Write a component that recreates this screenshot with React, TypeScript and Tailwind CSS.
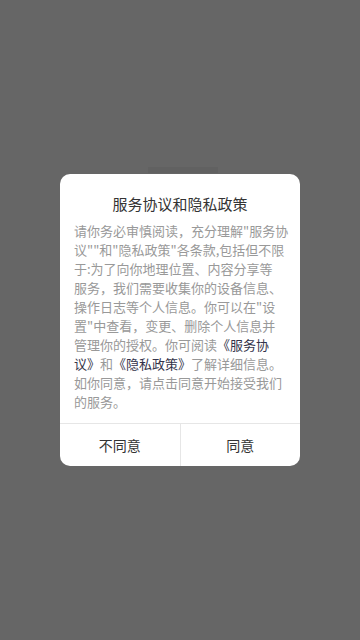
export default function App() {
  const font = { fontFamily: '"Noto Sans CJK SC", "Noto Sans", sans-serif' }
  return (
    <div
      className="relative w-[360px] h-[640px] bg-[#666666] flex items-center justify-center"
      style={font}
    >
      <div className="absolute left-[148px] top-[167px] w-[70px] h-[6px] bg-[#616161]" />
      <div className="relative w-[240px] bg-white rounded-[10px] overflow-hidden flex flex-col">
        <div className="pt-[19px] px-[14px] pb-[12px]">
          <h2 className="text-center text-[15px] leading-[22px] text-[#333333]">
            服务协议和隐私政策
          </h2>
          <p className="mt-[6px] text-[13px] leading-[19px] text-[#999999] whitespace-nowrap">
            请你务必审慎阅读，充分理解"服务协
            <br />
            议""和"隐私政策"各条款,包括但不限
            <br />
            于:为了向你地理位置、内容分享等
            <br />
            服务，我们需要收集你的设备信息、
            <br />
            操作日志等个人信息。你可以在"设
            <br />
            置"中查看，变更、删除个人信息并
            <br />
            管理你的授权。你可阅读<span className="text-[#33334a]">《服务协</span>
            <br />
            <span className="text-[#33334a]">议》</span>和<span className="text-[#33334a]">《隐私政策》</span>了解详细信息。
            <br />
            如你同意，请点击同意开始接受我们
            <br />
            的服务。
          </p>
        </div>
        <div className="flex border-t border-[#e6e6e6] h-[43px]">
          <button className="flex-1 flex items-center justify-center text-[14px] text-[#333333] border-r border-[#e6e6e6]">
            不同意
          </button>
          <button className="flex-1 flex items-center justify-center text-[14px] text-[#333333]">
            同意
          </button>
        </div>
      </div>
    </div>
  )
}
